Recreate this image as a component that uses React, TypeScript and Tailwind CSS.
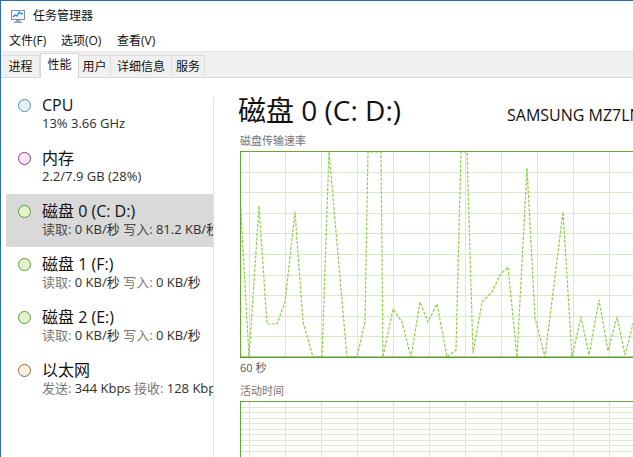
import React from "react";

const pts: [number, number][] = [
  [0, 44], [9, 206], [19, 55], [27, 173], [37, 173], [45, 151], [55, 61], [63, 171], [73, 206], [82, 206],
  [89, 1], [107, 206], [117, 206], [125, 171], [128, 1], [141, 1], [143, 206], [153, 158], [162, 171],
  [171, 206], [180, 151], [188, 171], [197, 153], [207, 206], [216, 199], [221, 1], [227, 1], [233, 202],
  [242, 151], [252, 141], [260, 124], [268, 116], [277, 206], [287, 17], [295, 167], [305, 206], [323, 61],
  [332, 206], [341, 166], [349, 204], [359, 149], [368, 200], [377, 166], [385, 204], [394, 169], [400, 190],
];

function Grid({ h, rowStep, rows }: { h: number; rowStep: number; rows: number }) {
  const v: number[] = [];
  for (let x = 9.5; x < 400; x += 36) v.push(x);
  const hz: number[] = [];
  for (let k = 1; k < rows; k++) hz.push(Math.round(k * rowStep) + 0.5);
  return (
    <g>
      {hz.map((y) => (
        <line key={"h" + y} x1={0} x2={400} y1={y} y2={y} stroke="#d9ebc9" strokeWidth={1} />
      ))}
      {v.map((x) => (
        <line key={"v" + x} x1={x} x2={x} y1={0} y2={h} stroke="#d9ebc9" strokeWidth={1} />
      ))}
    </g>
  );
}

function Chart1() {
  return (
    <svg width={400} height={207} className="block">
      <rect x={0} y={0} width={400} height={207} fill="#ffffff" />
      <Grid h={207} rowStep={20.6} rows={10} />
      <polyline
        points={pts.map((p) => `${p[0]},${p[1]}`).join(" ")}
        fill="none"
        stroke="#8ccf45"
        strokeWidth={1.2}
        strokeDasharray="3 1.5"
        strokeLinejoin="round"
      />
      <line x1={0} x2={400} y1={0.5} y2={0.5} stroke="#65a836" strokeWidth={1.2} />
      <line x1={0.5} x2={0.5} y1={0} y2={207} stroke="#65a836" strokeWidth={1.2} />
      <line x1={0} x2={400} y1={206.3} y2={206.3} stroke="#5a9e2c" strokeWidth={1.5} />
    </svg>
  );
}

function Chart2() {
  return (
    <svg width={400} height={60} className="block">
      <rect x={0} y={0} width={400} height={60} fill="#ffffff" />
      <Grid h={60} rowStep={5.55} rows={11} />
      <line x1={0} x2={400} y1={0.5} y2={0.5} stroke="#65a836" strokeWidth={1.2} />
      <line x1={0.5} x2={0.5} y1={0} y2={60} stroke="#65a836" strokeWidth={1.2} />
    </svg>
  );
}

type Item = {
  title: string;
  circle: string;
  sub: React.ReactNode;
  selected?: boolean;
};

const L = ({ children, sel }: { children: React.ReactNode; sel?: boolean }) => (
  <span className={sel ? "text-[#4a4a4a]" : "text-[#777777]"}>{children}</span>
);

function SideItem({ it }: { it: Item }) {
  return (
    <div
      className={
        "ml-[5px] w-[207px] h-[53px] pl-[12px] flex items-start overflow-hidden " +
        (it.selected ? "bg-[#d9d9d9]" : "")
      }
    >
      <div className={"mt-[11px] w-[13px] h-[13px] rounded-full border shrink-0 " + it.circle} />
      <div className="ml-[11px] flex flex-col whitespace-nowrap">
        <div className="mt-[8px] h-[18px] leading-[18px] text-[16px] text-[#111111]">{it.title}</div>
        <div className="mt-[1px] h-[16px] leading-[16px] text-[13px] text-[#2e2e2e]">{it.sub}</div>
      </div>
    </div>
  );
}

export default function App() {
  const items: Item[] = [
    {
      title: "CPU",
      circle: "border-[#4f8cc0] bg-[#e3eff9]",
      sub: <span>13% 3.66 GHz</span>,
    },
    {
      title: "内存",
      circle: "border-[#8b3a8c] bg-[#f6e6f6]",
      sub: <span>2.2/7.9 GB (28%)</span>,
    },
    {
      title: "磁盘 0 (C: D:)",
      circle: "border-[#5b9a2c] bg-[#e4f3cf]",
      selected: true,
      sub: (
        <span>
          <L sel>读取:</L> 0 KB/秒 <L sel>写入:</L> 81.2 KB/秒
        </span>
      ),
    },
    {
      title: "磁盘 1 (F:)",
      circle: "border-[#5b9a2c] bg-[#e4f3cf]",
      sub: (
        <span>
          <L>读取:</L> 0 KB/秒 <L>写入:</L> 0 KB/秒
        </span>
      ),
    },
    {
      title: "磁盘 2 (E:)",
      circle: "border-[#5b9a2c] bg-[#e4f3cf]",
      sub: (
        <span>
          <L>读取:</L> 0 KB/秒 <L>写入:</L> 0 KB/秒
        </span>
      ),
    },
    {
      title: "以太网",
      circle: "border-[#a8693a] bg-[#fbeee3]",
      sub: (
        <span>
          <L>发送:</L> 344 Kbps <L>接收:</L> 128 Kbps
        </span>
      ),
    },
  ];

  return (
    <div className="w-[633px] h-[457px] overflow-hidden bg-white border-t border-l border-[#2b6cb3] flex flex-col font-[family-name:'Open_Sans','Noto_Sans_CJK_SC',sans-serif] text-[#1a1a1a]">
      {/* title bar */}
      <div className="h-[30px] shrink-0 flex items-center pl-[9px]">
        <svg width={16} height={16} viewBox="0 0 16 16" className="shrink-0">
          <rect x={1.5} y={2.5} width={13} height={9} fill="#eef5fb" stroke="#7d90a6" />
          <polyline points="3,9 5,7 7,8 9,4 11,6 13,5" fill="none" stroke="#2f7bc4" strokeWidth={1.1} />
          <rect x={6} y={12} width={4} height={1.5} fill="#8a9bb0" />
          <rect x={4} y={13.5} width={8} height={1.5} fill="#8a9bb0" />
        </svg>
        <span className="ml-[7px] text-[12px] leading-[16px] text-[#111111]">任务管理器</span>
      </div>
      {/* menu bar */}
      <div className="h-[20px] shrink-0 flex items-center pl-[8px] text-[12px] leading-[16px] text-[#111111]">
        <span className="w-[52px]">文件(F)</span>
        <span className="w-[56px]">选项(O)</span>
        <span>查看(V)</span>
      </div>
      {/* tab bar */}
      <div className="h-[27px] shrink-0 bg-[#f0f0f0] border-t border-[#e6e6e6] border-b border-b-[#d9d9d9] flex items-end pl-[1px] text-[12px] text-[#111111]">
        <div className="w-[38px] h-[22px] flex items-center justify-center border-t border-r border-[#dcdcdc]">进程</div>
        <div className="w-[39px] h-[25px] -mb-px bg-white flex items-center justify-center border-t border-l border-r border-[#d9d9d9] pb-[2px]">
          性能
        </div>
        <div className="w-[32px] h-[22px] flex items-center justify-center border-t border-r border-[#dcdcdc]">用户</div>
        <div className="w-[61px] h-[22px] flex items-center justify-center border-t border-r border-[#dcdcdc]">详细信息</div>
        <div className="w-[33px] h-[22px] flex items-center justify-center border-t border-r border-[#dcdcdc]">服务</div>
      </div>
      {/* content */}
      <div className="flex-1 flex min-h-0">
        <div className="w-[212px] shrink-0 pt-[10px] flex flex-col overflow-hidden">
          {items.map((it) => (
            <SideItem key={it.title} it={it} />
          ))}
        </div>
        <div className="w-px shrink-0 mt-[19px] bg-[#e2e2e2]" />
        <div className="flex-1 min-w-0 pl-[24px] pt-[14px] flex flex-col">
          <div className="h-[36px] flex items-baseline whitespace-nowrap">
            <div className="w-[269px] shrink-0 text-[28px] leading-[36px] text-[#111111]">磁盘 0 (C: D:)</div>
            <div className="text-[16px] text-[#111111]">SAMSUNG MZ7LN256HCHP-000L7</div>
          </div>
          <div className="mt-[6px] h-[14px] leading-[14px] pl-[2px] text-[11px] text-[#737373]">磁盘传输速率</div>
          <div className="mt-[3px] ml-[2px]">
            <Chart1 />
          </div>
          <div className="mt-[3px] h-[14px] leading-[14px] pl-[2px] text-[11px] text-[#555555]">60 秒</div>
          <div className="mt-[9px] h-[14px] leading-[14px] pl-[2px] text-[11px] text-[#737373]">活动时间</div>
          <div className="mt-[3px] ml-[2px]">
            <Chart2 />
          </div>
        </div>
      </div>
    </div>
  );
}
